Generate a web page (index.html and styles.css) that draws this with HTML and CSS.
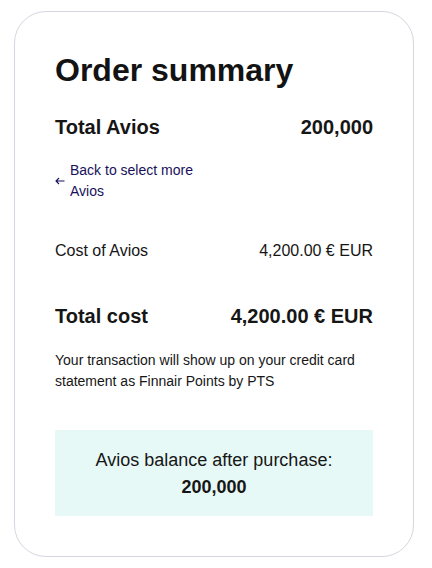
FILE: index.html
```html
<!DOCTYPE html>
<html lang="en">
<head>
<meta charset="utf-8">
<title>Order summary</title>
<link rel="stylesheet" href="styles.css">
</head>
<body>
<div class="page">
  <section class="card">
    <h1 class="title">Order summary</h1>
    <div class="row row-total-avios">
      <span>Total Avios</span>
      <span>200,000</span>
    </div>
    <a class="back-link" href="#">
      <svg class="back-arrow" width="10" height="8" viewBox="0 0 10 8" aria-hidden="true">
        <path d="M9.5 4H1M4 1L1 4L4 7" fill="none" stroke="currentColor" stroke-width="1.1"/>
      </svg>
      <span class="back-text">Back to select more Avios</span>
    </a>
    <div class="row row-cost">
      <span>Cost of Avios</span>
      <span>4,200.00 € EUR</span>
    </div>
    <div class="row row-total-cost">
      <span>Total cost</span>
      <span>4,200.00 € EUR</span>
    </div>
    <p class="note">Your transaction will show up on your credit card statement as Finnair Points by PTS</p>
    <div class="balance">
      <div class="balance-label">Avios balance after purchase:</div>
      <div class="balance-value">200,000</div>
    </div>
  </section>
</div>
</body>
</html>
```

FILE: styles.css
```css
html, body {
  margin: 0;
  padding: 0;
  background: #ffffff;
}

body {
  font-family: "Liberation Sans", Arial, Helvetica, sans-serif;
  color: #161616;
}

.page {
  padding: 11px 18px 11px 14px;
}

.card {
  box-sizing: border-box;
  width: 400px;
  border: 1px solid #d5d7e0;
  border-radius: 32px;
  padding: 40px;
}

.title {
  margin: 0;
  font-size: 32px;
  line-height: 36px;
  font-weight: 700;
  color: #131313;
}

.row {
  display: flex;
  justify-content: space-between;
  align-items: baseline;
}

.row-total-avios {
  margin-top: 27px;
  font-size: 20px;
  line-height: 24px;
  font-weight: 700;
}

.back-link {
  display: inline-flex;
  align-items: center;
  margin-top: 21px;
  color: #17115a;
  text-decoration: none;
  font-size: 14px;
  line-height: 21px;
}

.back-arrow {
  flex: none;
  width: 10px;
  height: 8px;
}

.back-text {
  margin-left: 5px;
  max-width: 140px;
}

.row-cost {
  margin-top: 37px;
  font-size: 16px;
  line-height: 24px;
}

.row-total-cost {
  margin-top: 41px;
  font-size: 20px;
  line-height: 24px;
  font-weight: 700;
}

.note {
  margin: 22px 0 0;
  font-size: 14px;
  line-height: 21px;
}

.balance {
  margin-top: 38px;
  background: #e7f9f7;
  padding: 17px 16px 15px;
  text-align: center;
  font-size: 18px;
  line-height: 27px;
}

.balance-value {
  font-weight: 700;
}
```
